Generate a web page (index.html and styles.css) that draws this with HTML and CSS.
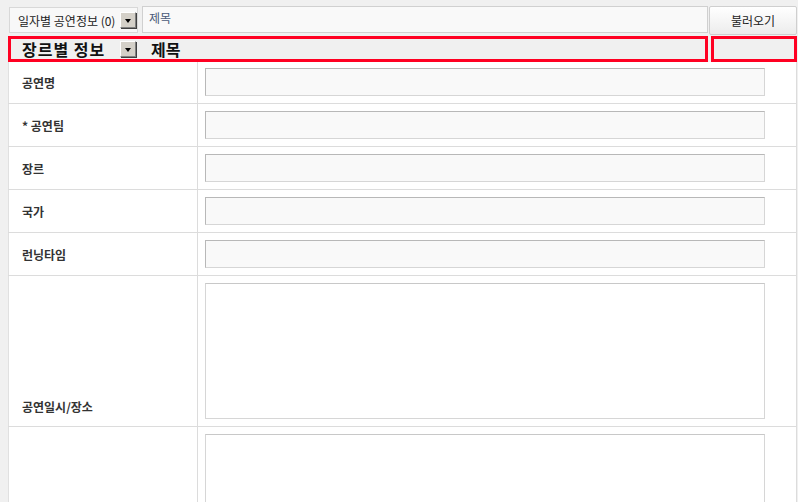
FILE: index.html
```html
<!DOCTYPE html>
<html>
  <head>
    <meta charset="utf-8">
    <link rel="stylesheet" href="styles.css">
  </head>
  <body>
    <div class="toolbar">
      <div class="select">
        <span>일자별 공연정보 (0)</span>
        <span class="arrow-btn"></span>
      </div>
      <div class="title-input">제목</div>
      <button class="load-btn">불러오기</button>
    </div>

    <div class="header-row">
      <div class="genre-box">
        <span class="genre-label">장르별 정보</span>
        <span class="arrow-btn"></span>
        <span class="genre-title">제목</span>
      </div>
      <div class="side-box"></div>
    </div>

    <table class="form">
      <tbody>
        <tr class="first">
          <th>공연명</th>
          <td><div class="field"></div></td>
        </tr>
        <tr>
          <th>* 공연팀</th>
          <td><div class="field"></div></td>
        </tr>
        <tr>
          <th>장르</th>
          <td><div class="field"></div></td>
        </tr>
        <tr>
          <th>국가</th>
          <td><div class="field"></div></td>
        </tr>
        <tr>
          <th>런닝타임</th>
          <td><div class="field"></div></td>
        </tr>
        <tr>
          <th class="bottom">공연일시/장소</th>
          <td><div class="area"></div></td>
        </tr>
        <tr>
          <th></th>
          <td><div class="area"></div></td>
        </tr>
      </tbody>
    </table>
  </body>
</html>
```

FILE: styles.css
```css
body {
  margin: 0;
  background-color: #f0f0f0;
  font-family: "Noto Sans CJK KR", "Noto Sans", sans-serif;
  color: #333;
  overflow: hidden;
}

.toolbar {
  display: flex;
  align-items: flex-start;
  height: 30px;
  padding: 6px 0 0 9px;
  box-sizing: border-box;
}

.select {
  display: flex;
  align-items: center;
  justify-content: space-between;
  width: 129px;
  height: 26px;
  margin-top: 1px;
  padding: 0 1px 0 8px;
  box-sizing: border-box;
  border: 1px solid #d8d8d8;
  background-color: #f8f8f8;
  font-size: 12px;
  color: #222;
}

.arrow-btn {
  position: relative;
  display: inline-block;
  width: 16px;
  height: 16px;
  box-sizing: border-box;
  border: 1px solid #808080;
  border-top-color: #fff;
  border-left-color: #fff;
  background-color: #d4d0c8;
  box-shadow: 1px 1px 0 #404040;
}

.arrow-btn::after {
  content: "";
  position: absolute;
  left: 4px;
  top: 6px;
  border-left: 3px solid transparent;
  border-right: 3px solid transparent;
  border-top: 4px solid #000;
}

.title-input {
  width: 566px;
  height: 27px;
  margin-left: 4px;
  padding: 3px 6px;
  box-sizing: border-box;
  border: 1px solid #d0d0d0;
  background-color: #f9f9f9;
  font-size: 12px;
  line-height: 16px;
  color: #4a5a78;
}

.load-btn {
  width: 88px;
  height: 29px;
  margin-left: 1px;
  border: 1px solid #cfcfcf;
  border-radius: 2px;
  background: linear-gradient(#ffffff, #ececec);
  font-family: "Noto Sans CJK KR", sans-serif;
  font-size: 12px;
  color: #222;
}

.header-row {
  display: flex;
  height: 26px;
  margin-top: 6px;
}

.genre-box {
  display: flex;
  align-items: center;
  width: 700px;
  margin-left: 8px;
  padding-left: 11px;
  box-sizing: border-box;
  border: 3px solid #ff0022;
  font-size: 16px;
  font-weight: bold;
  color: #111;
}

.genre-label {
  width: 98px;
  letter-spacing: 1px;
}

.genre-title {
  margin-left: 15px;
}

.side-box {
  width: 86px;
  margin-left: 3px;
  box-sizing: border-box;
  border: 3px solid #ff0022;
}

.form {
  width: 789px;
  margin-left: 8px;
  border-collapse: collapse;
  background-color: #fff;
  border-left: 1px solid #e0e0e0;
  border-right: 1px solid #dcdcdc;
}

.form th,
.form td {
  border-bottom: 1px solid #dcdcdc;
  padding: 7px;
}

.form tr.first th,
.form tr.first td {
  padding-top: 6px;
}

.form th {
  width: 168px;
  padding-left: 13px;
  border-right: 1px solid #dcdcdc;
  text-align: left;
  font-size: 12px;
  font-weight: bold;
  color: #333;
}

.form th.bottom {
  vertical-align: bottom;
  padding-bottom: 11px;
}

.field {
  width: 560px;
  height: 28px;
  box-sizing: border-box;
  border: 1px solid #d6d6d6;
  border-top-color: #b8b8b8;
  border-left-color: #b8b8b8;
  background-color: #f9f9f9;
}

.area {
  width: 560px;
  height: 136px;
  box-sizing: border-box;
  border: 1px solid #d6d6d6;
  border-top-color: #c8c8c8;
  background-color: #fff;
}
```
